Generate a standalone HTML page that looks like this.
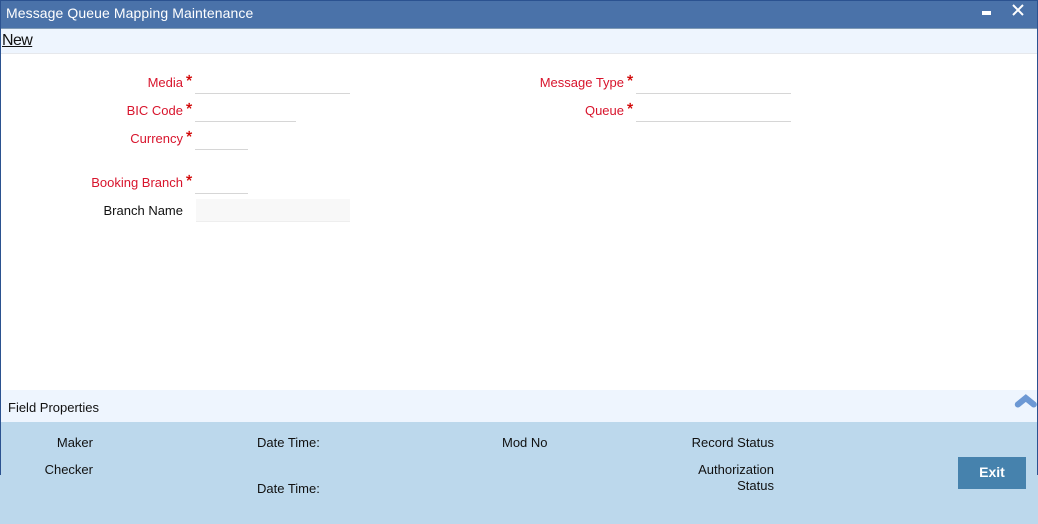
<!DOCTYPE html>
<html><head><meta charset="utf-8"><style>
html,body{margin:0;padding:0;background:#fff}
#p{position:relative;width:1038px;height:524px;overflow:hidden;background:#fff;font-family:"Liberation Sans",Arial,sans-serif;font-size:13px;color:#111}
#p div{position:absolute;white-space:nowrap}
.l{text-align:right;color:#d8142c;line-height:16px;height:16px}
.k{text-align:right;color:#111;line-height:16px;height:16px}
.s{color:#d00000;font-size:16px;-webkit-text-stroke:0.3px #d00000;line-height:16px;height:16px}
.i{height:1px;background:#d6d6d6}
</style></head><body><div id="p">
<div style="left:0;top:0;width:1038px;height:28px;background:#4a72a9"></div>
<div style="left:0;top:0;width:1038px;height:1px;background:#2b5290"></div>
<div style="left:0;top:28px;width:1038px;height:1px;background:#7f9ab5"></div>
<div style="left:6px;top:5px;line-height:16px;font-size:14px;letter-spacing:0.09px;color:#fff">Message Queue Mapping Maintenance</div>
<div style="left:982px;top:11px;width:9px;height:4px;background:#fff"></div>
<svg style="position:absolute;left:1011px;top:4px" width="14" height="12"><path d="M2 1L12 11M12 1L2 11" stroke="#fff" stroke-width="2" fill="none"/></svg>
<div style="left:0;top:29px;width:1038px;height:24px;background:#eef5fe"></div>
<div style="left:0;top:53px;width:1038px;height:1px;background:#e6e8ec"></div>
<div style="left:2px;top:32px;line-height:18px;font-size:16px;letter-spacing:-0.6px;color:#111;text-decoration:underline">New</div>

<div class="l" style="left:60px;width:123px;top:75px">Media</div><div class="s" style="left:186px;top:74px">*</div><div class="i" style="left:195px;top:93px;width:155px"></div>
<div class="l" style="left:60px;width:123px;top:103px">BIC Code</div><div class="s" style="left:186px;top:102px">*</div><div class="i" style="left:195px;top:121px;width:101px"></div>
<div class="l" style="left:60px;width:123px;top:131px">Currency</div><div class="s" style="left:186px;top:130px">*</div><div class="i" style="left:195px;top:149px;width:53px"></div>
<div class="l" style="left:60px;width:123px;top:175px">Booking Branch</div><div class="s" style="left:186px;top:174px">*</div><div class="i" style="left:195px;top:193px;width:53px"></div>
<div class="k" style="left:60px;width:123px;top:203px">Branch Name</div>
<div style="left:196px;top:199px;width:154px;height:22px;background:#f8f8f8;border-bottom:1px solid #eeeeee"></div>

<div class="l" style="left:500px;width:124px;top:75px">Message Type</div><div class="s" style="left:627px;top:74px">*</div><div class="i" style="left:636px;top:93px;width:155px"></div>
<div class="l" style="left:500px;width:124px;top:103px">Queue</div><div class="s" style="left:627px;top:102px">*</div><div class="i" style="left:636px;top:121px;width:155px"></div>

<div style="left:0;top:390px;width:1038px;height:32px;background:#eef5fe"></div>
<div style="left:8px;top:400px;line-height:16px">Field Properties</div>
<svg style="position:absolute;left:1014px;top:392px" width="24" height="18"><path d="M3.800 12.500L11.800 6L19.800 12.500" stroke="#6c98d4" stroke-width="6" stroke-linecap="round" stroke-linejoin="miter" fill="none"/></svg>
<div style="left:0;top:422px;width:1038px;height:102px;background:#bcd8ec"></div>
<div class="k" style="left:0;width:93px;top:435px">Maker</div>
<div class="k" style="left:0;width:93px;top:462px">Checker</div>
<div style="left:257px;top:435px;line-height:16px">Date Time:</div>
<div style="left:257px;top:481px;line-height:16px">Date Time:</div>
<div style="left:502px;top:435px;line-height:16px">Mod No</div>
<div class="k" style="left:650px;width:124px;top:435px">Record Status</div>
<div class="k" style="left:650px;width:124px;top:462px">Authorization</div>
<div class="k" style="left:650px;width:124px;top:478px">Status</div>
<div style="left:958px;top:457px;width:68px;height:32px;background:#4682ad;color:#fff;font-size:14px;font-weight:bold;text-align:center;line-height:31px">Exit</div>

<div style="left:0;top:0;width:1px;height:475px;background:#2b5290"></div>
<div style="left:1037px;top:0;width:1px;height:475px;background:#2b5290"></div>
</div></body></html>
